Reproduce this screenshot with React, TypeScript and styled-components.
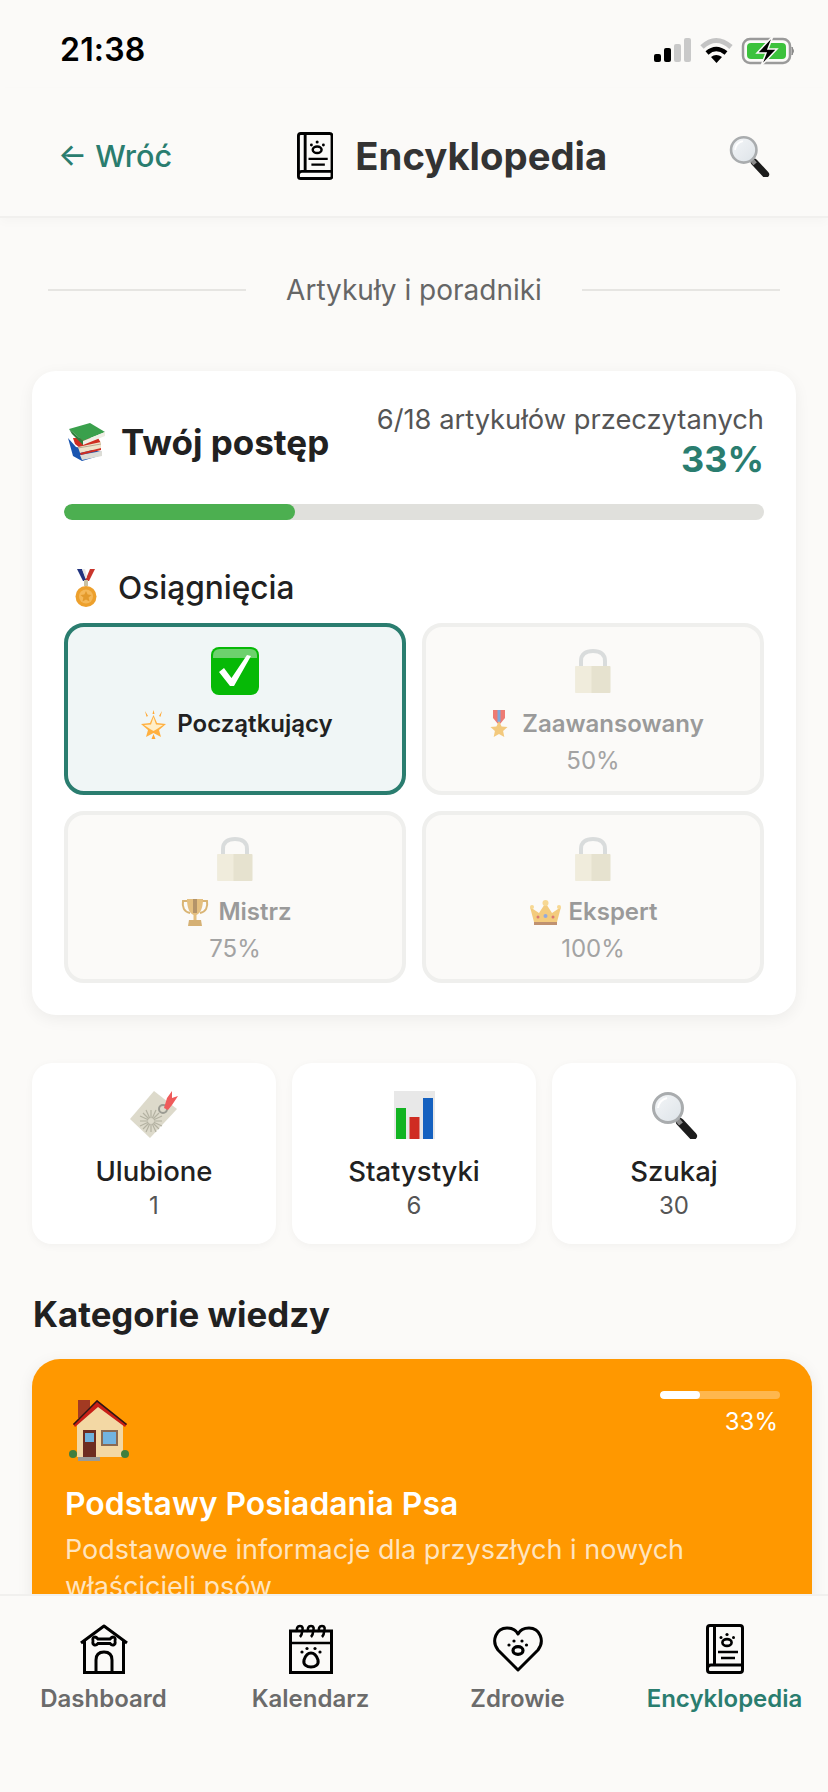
import React from "react";
import styled, { createGlobalStyle } from "styled-components";

const Global = createGlobalStyle`
  html, body { margin: 0; padding: 0; background: #fbfaf8; }
  * { box-sizing: border-box; }
`;
const FONT = `Inter, "Noto Sans", sans-serif`;

const Page = styled.div`
  width: 828px; height: 1792px; display: flex; flex-direction: column; overflow: hidden;
  background: #fbfaf8; font-family: ${FONT}; color: #212121;
`;
const StatusBar = styled.div`
  height: 88px; flex: none; display: flex; justify-content: space-between; align-items: flex-start;
  padding: 32px 33px 0 60px;
`;
const Time = styled.span`
  font-size: 32px; line-height: 36px; font-weight: 600; color: #000; letter-spacing: 0.2px;
`;
const StatusIcons = styled.svg`margin-top: 4px; display: block;`;
const Header = styled.header`
  height: 130px; flex: none; display: flex; justify-content: space-between; align-items: center;
  padding: 8px 58px 0; border-bottom: 2px solid #f1f0ee; box-shadow: 0 4px 10px rgba(0,0,0,.025);
`;
const Back = styled.span`
  font-size: 30.5px; font-weight: 500; color: #2a7d6f; line-height: 36px; white-space: nowrap;
`;
const TitleWrap = styled.div`display: flex; align-items: center; gap: 22px; margin-left: 4px;`;
const Title = styled.h1`
  margin: 0; font-size: 38.3px; line-height: 44px; font-weight: 700; color: #333;
`;
const Main = styled.main`
  flex: 1; min-height: 0; overflow: hidden; padding: 56px 16px 0 32px;
`;
const Divider = styled.div`
  display: flex; align-items: center; gap: 40px; margin: 0 32px 0 16px;
  &::before, &::after { content: ""; flex: 1; height: 2px; background: #e6e5e2; }
`;
const DividerText = styled.span`font-size: 28px; line-height: 32px; color: #666; font-weight: 400;`;
const ProgressCard = styled.section`
  width: 764px; height: 644px; margin-top: 65px; padding: 32px; background: #fff; border-radius: 24px;
  box-shadow: 0 4px 16px rgba(0,0,0,.06);
`;
const ProgressTop = styled.div`display: flex; justify-content: space-between; align-items: center;`;
const Heading = styled.div`display: flex; align-items: center; gap: 16px; margin-left: 4px;`;
const HeadingText = styled.h2`margin: 0; font-size: 35px; line-height: 44px; font-weight: 700; color: #212121;`;
const ProgressInfo = styled.div`text-align: right;`;
const Read = styled.div`font-size: 27.3px; line-height: 34px; color: #555;`;
const Percent = styled.div`font-size: 36px; line-height: 44px; font-weight: 700; color: #2a7d6f;`;
const Track = styled.div`height: 16px; margin-top: 23px; border-radius: 8px; background: #e0e0dc; overflow: hidden;`;
const Fill = styled.div`height: 100%; border-radius: 8px; background: #4caf50;`;
const AchHeading = styled.div`display: flex; align-items: center; gap: 21px; margin: 48px 0 15px 11px;`;
const AchText = styled.h3`margin: 0; font-size: 31.6px; line-height: 40px; font-weight: 500; color: #212121;`;
const AchGrid = styled.div`display: grid; grid-template-columns: 1fr 1fr; gap: 16px;`;
const Ach = styled.div<{ $on?: boolean }>`
  height: 172px; padding-top: 20px; border-radius: 20px; display: flex; flex-direction: column; align-items: center;
  border: 4px solid ${p => (p.$on ? "#2a7d6f" : "#efefed")};
  background: ${p => (p.$on ? "#f0f6f6" : "#fbfaf8")};
`;
const AchIcon = styled.div<{ $on?: boolean }>`height: 48px; opacity: ${p => (p.$on ? 1 : 0.55)};`;
const AchLabel = styled.div<{ $on?: boolean }>`
  display: flex; align-items: center; gap: 7px; margin-top: 12px; font-size: 24px; line-height: 34px; font-weight: 600;
  color: ${p => (p.$on ? "#212121" : "#9a9a9a")};
  svg { opacity: ${p => (p.$on ? 1 : 0.65)}; }
`;
const AchEmoji = styled.span`width: 33px; height: 30px; flex: none; display: flex; align-items: center; justify-content: center;`;
const AchPct = styled.div`margin-top: 5px; font-size: 24px; line-height: 30px; color: #a3a3a3;`;
const Stats = styled.div`display: grid; grid-template-columns: repeat(3, 1fr); gap: 16px; width: 764px; margin-top: 48px;`;
const Stat = styled.div`
  height: 181px; padding-top: 28px; background: #fff; border-radius: 20px; display: flex; flex-direction: column; align-items: center;
  box-shadow: 0 2px 8px rgba(0,0,0,.04);
`;
const StatIcon = styled.div`height: 48px;`;
const StatLabel = styled.div`margin-top: 14px; font-size: 27.5px; line-height: 36px; font-weight: 500; color: #212121;`;
const StatCount = styled.div`margin-top: 2px; font-size: 24px; line-height: 30px; color: #555;`;
const SectionTitle = styled.h2`margin: 50px 0 25px 1px; font-size: 34.8px; line-height: 40px; font-weight: 700; color: #212121;`;
const CategoryCard = styled.article`
  background: #ff9800; border-radius: 28px; padding: 32px 32px 32px; color: #fff; box-shadow: 0 4px 16px rgba(0,0,0,.08);
`;
const CategoryTop = styled.div`display: flex; justify-content: space-between; align-items: flex-start; height: 70px;`;
const HouseBox = styled.div`margin: 9px 0 0 5px;`;
const CatProgress = styled.div`width: 120px; display: flex; flex-direction: column; align-items: flex-end;`;
const CatTrack = styled.div`width: 100%; height: 8px; border-radius: 4px; background: rgba(255,255,255,.3); overflow: hidden;`;
const CatFill = styled.div`height: 100%; border-radius: 4px; background: #fff;`;
const CatPct = styled.div`margin-top: 8px; font-size: 24px; line-height: 30px; color: #fff; margin-right: 2px;`;
const CatTitle = styled.h3`margin: 23px 0 0 1px; font-size: 31.9px; line-height: 40px; font-weight: 600;`;
const CatDesc = styled.p`margin: 7px 0 0 1px; font-size: 27px; line-height: 37px; color: rgba(255,255,255,.75);`;
const Nav = styled.nav`
  height: 198px; flex: none; display: grid; grid-template-columns: repeat(4, 1fr); padding-top: 28px;
  background: #fbfaf8; border-top: 2px solid #f1f0ee;
`;
const Tab = styled.div`display: flex; flex-direction: column; align-items: center;`;
const TabIcon = styled.div`height: 50px; display: flex; align-items: center;`;
const TabLabel = styled.span<{ $on?: boolean }>`
  margin-top: 9px; font-size: 24px; line-height: 32px; font-weight: 600; color: ${p => (p.$on ? "#2a7d6f" : "#6b6b6b")};
`;

const StatusGlyphs = () => (
  <StatusIcons width="142" height="32" viewBox="0 0 142 32">
    <rect x="1" y="18" width="7" height="8" rx="2" fill="#000" />
    <rect x="11" y="12" width="7" height="14" rx="2" fill="#000" />
    <rect x="21" y="8" width="7" height="18" rx="2" fill="#c9c9c9" />
    <rect x="31" y="2" width="7" height="24" rx="2" fill="#c9c9c9" />
    <path d="M49 11 Q63 -2 78 11" fill="none" stroke="#c4c4c4" strokeWidth="5" />
    <path d="M54 17 Q63 9 73 17" fill="none" stroke="#000" strokeWidth="4.5" />
    <path d="M58 21 Q63 17 69 21 L63.5 27 Z" fill="#000" />
    <rect x="90" y="3" width="47" height="24" rx="7" fill="none" stroke="#9a9a9a" strokeWidth="2.5" />
    <rect x="94" y="7" width="39" height="16" rx="4" fill="#3cc23c" />
    <path d="M139 11 Q142 15 139 19 Z" fill="#8a8a8a" stroke="#8a8a8a" />
    <path d="M120 0 L104 17 H113 L108 30 L124 13 H115 Z" fill="#000" stroke="#fbfaf8" strokeWidth="1.5" />
  </StatusIcons>
);

const BookIcon = ({ h = 50 }: { h?: number }) => (
  <svg width={(h * 38) / 50} height={h} viewBox="0 0 38 50" fill="none" stroke="#000" strokeWidth="3">
    <rect x="1.5" y="1.5" width="35" height="47" rx="2.5" />
    <path d="M8.5 1.5V41M1.5 44Q2 41 5 41H36.5" />
    <ellipse cx="21" cy="18.5" rx="4.6" ry="3.4" strokeWidth="2.6" />
    <g fill="#000" stroke="none">
      <circle cx="21" cy="10.5" r="1.6" /><circle cx="15" cy="13.5" r="1.5" /><circle cx="27.5" cy="13.5" r="1.5" />
    </g>
    <path d="M12 28H32M15 34H29" strokeWidth="2.4" />
  </svg>
);
const PawDots = ({ pts }: { pts: number[][] }) => (
  <g fill="#000" stroke="none">{pts.map(([x, y]) => <circle key={x + "-" + y} cx={x} cy={y} r="1.6" />)}</g>
);
const DogHouseIcon = () => (
  <svg width="48" height="50" viewBox="0 0 48 50" fill="none" stroke="#000" strokeWidth="3">
    <path d="M1 19 L24 2 L47 19" strokeLinejoin="round" />
    <path d="M4.5 16V48.5H43.5V16" />
    <path d="M16 48.5V36Q16 28 24 28T32 36V48.5" />
    <path d="M18 15C15 11.5 12 13 13 17 12 21 15.5 22.5 18 19.5H30C32.5 22.5 36 21 35 17 36 13 33 11.5 30 15Z" strokeWidth="2.8" />
  </svg>
);
const CalendarIcon = () => (
  <svg width="44" height="50" viewBox="0 0 44 50" fill="none" stroke="#000" strokeWidth="3">
    <rect x="1.5" y="7" width="41" height="41.5" />
    <path d="M1.5 19H42.5" strokeWidth="2.4" />
    <path d="M8 8Q7 2 11 2T13 8Q13 11 11 13M19 8Q18 2 22 2T24 8Q24 11 22 13M30 8Q29 2 33 2T35 8Q35 11 33 13" strokeWidth="2.6" />
    <path d="M22 29C18 29 16 33 15 36 14 41 18 43 22 43S30 41 29 36C28 33 26 29 22 29Z" />
    <PawDots pts={[[13, 28], [18, 24.5], [26, 24.5], [31, 28]]} />
  </svg>
);
const HeartIcon = () => (
  <svg width="50" height="46" viewBox="0 0 50 46" fill="none" stroke="#000" strokeWidth="3">
    <path d="M25 44 L5 24 C-2 15 3 2 14 2 C19 2 23 4 25 8 C27 4 31 2 36 2 C47 2 52 15 45 24 Z" strokeLinejoin="round" />
    <ellipse cx="25" cy="24.5" rx="5" ry="3.8" strokeWidth="3.2" />
    <PawDots pts={[[16, 19], [21, 15], [29, 15], [33.5, 19]]} />
  </svg>
);
const Magnifier = ({ s = 48 }: { s?: number }) => (
  <svg width={s} height={s} viewBox="0 0 48 48">
    <defs>
      <linearGradient id="lens" x1="0" y1="0" x2="1" y2="1"><stop offset="0" stopColor="#f4f6f8" /><stop offset="1" stopColor="#dde3e8" /></linearGradient>
    </defs>
    <path d="M30 31 L43 45" stroke="#1c1c1c" strokeWidth="8" strokeLinecap="round" />
    <path d="M26 27 L31 33" stroke="#8c8c8c" strokeWidth="5" />
    <circle cx="18" cy="17" r="14.5" fill="url(#lens)" stroke="#a9acae" strokeWidth="3" />
    <path d="M8 17 Q9 9 17 7" fill="none" stroke="#fff" strokeWidth="2" />
  </svg>
);
const Books = () => (
  <svg width="37" height="38" viewBox="0 0 37 38">
    <path d="M0 15 L8 24 L34 29 V32 L14 38 L5 33Z" fill="#1a55b0" />
    <path d="M12 32 L34 28 V33 L14 37Z" fill="#dcdcd6" />
    <path d="M5 15 L30 15 L33 20 L12 25 L7 21Z" fill="#cf2e22" />
    <path d="M10 24 L33 19 V25 L12 30Z" fill="#f0e2ca" />
    <path d="M10 25 L33 21" stroke="#b8a88e" strokeWidth="1" />
    <path d="M12 30 L33 25 V27 L13 32Z" fill="#cf2e22" />
    <path d="M1 6 L22 0 L37 9 L15 18 Z" fill="#3aa04c" />
    <path d="M1 6 L15 18 V22 L4 11 Z" fill="#2c7f3c" />
    <path d="M15 18 L37 9 V13 L15 22 Z" fill="#efeee4" />
  </svg>
);
const Medal = () => (
  <svg width="22" height="39" viewBox="0 0 22 39">
    <path d="M2 0H7L12 12H8Z" fill="#22347f" /><path d="M20 0H15L10 12H14Z" fill="#c9352c" /><path d="M7 0H10L12 8 10.5 10Z" fill="#e6e6e6" />
    <rect x="9" y="11" width="4" height="6" fill="#c9c1a4" />
    <circle cx="11" cy="27.5" r="10.5" fill="#eda02c" />
    <circle cx="11" cy="27.5" r="7" fill="#f5b858" />
    <path d="M11 22l1.7 3.6 3.8.4-2.9 2.6.9 3.8-3.5-2-3.5 2 .9-3.8L5.5 26l3.8-.4Z" fill="#e39a2c" />
  </svg>
);
const Check = () => (
  <svg width="48" height="48" viewBox="0 0 48 48">
    <rect width="48" height="48" rx="8" fill="#06b906" />
    <path d="M2 9Q2 2 9 2H39Q46 2 46 9V11H2Z" fill="#6dd16d" />
    <path d="M8 25 L13 21 L20.5 31 L36 8 L40 9 L23 39 H19 Z" fill="#fff" />
  </svg>
);
const Lock = () => (
  <svg width="36" height="48" viewBox="0 0 36 48">
    <path d="M6 20V14C6 7 11 4 18 4S30 7 30 14V20" fill="none" stroke="#bfc4c6" strokeWidth="4" />
    <rect x="0.5" y="19" width="35" height="27" rx="1" fill="#d6cfae" />
    <rect x="0.5" y="19" width="16" height="27" fill="#e8e1c6" />
  </svg>
);
const Star = () => (
  <svg width="27" height="29" viewBox="0 0 27 29">
    <path d="M13.5 5 L17 13 L26 14 L19 20 L21 27 L13.5 23 L6 27 L8 20 L1 14 L10 13 Z" fill="#ffb040" />
    <path d="M13.5 7 L16 14.5 L23 15 L17 19 L13.5 21 L10 19 L4 15 L11 14.5 Z" fill="#ffeec8" />
    <path d="M13.5 0l1 4h-2zM5 1l3 5-1.5.8zM22 1l-3 5 1.5.8zM13.5 24l2 5h-4z" fill="#ffa733" />
  </svg>
);
const MilitaryMedal = () => (
  <svg width="18" height="29" viewBox="0 0 18 29">
    <path d="M3 0H15V8L10 14H8L3 8Z" fill="#e8382f" />
    <rect x="7.5" y="0" width="3" height="12" fill="#3a7fd0" />
    <path d="M9 11l2.6 5.4 5.9.7-4.4 4 1.2 5.9-5.3-3-5.3 3 1.2-5.9-4.4-4 5.9-.7Z" fill="#f0b03c" />
  </svg>
);
const Trophy = () => (
  <svg width="28" height="29" viewBox="0 0 28 29">
    <path d="M7 3H2C1 9 3 14 9 15M21 3H26C27 9 25 14 19 15" fill="none" stroke="#c8902e" strokeWidth="2" />
    <path d="M6 1H22C22 9 20 15 15.5 17V22H12.5V17C8 15 6 9 6 1Z" fill="#d9a040" />
    <path d="M12 1H16V15H12Z" fill="#8f5f1e" />
    <path d="M8 22H20L21 28H7Z" fill="#c28a2e" />
  </svg>
);
const Crown = () => (
  <svg width="31" height="29" viewBox="0 0 31 29">
    <path d="M4 24 L0 9 L9 15 L15.5 5 L22 15 L31 9 L27 24 Z" fill="#f0b23c" />
    <path d="M4 24H27V27H4Z" fill="#a05a28" />
    <circle cx="15.5" cy="5" r="3" fill="#f5c75e" /><circle cx="2" cy="9" r="2" fill="#f5c75e" /><circle cx="29" cy="9" r="2" fill="#f5c75e" />
    <circle cx="15.5" cy="18" r="2" fill="#5a7fd0" /><circle cx="8" cy="19" r="1.5" fill="#c9352c" /><circle cx="23" cy="19" r="1.5" fill="#c9352c" />
  </svg>
);
const BookmarkTag = () => (
  <svg width="49" height="48" viewBox="0 0 49 48">
    <path d="M24 0 L47 18 L20 47 L0 28 Z" fill="#dddacb" />
    <g stroke="#b4b2a2" strokeWidth="1.2">
      <path d="M10 30H32M21 19V41M13 22L29 38M29 22L13 38M16 19L26 41M26 19L16 41M10 25L32 35M32 25L10 35" />
    </g>
    <circle cx="21" cy="30" r="3" fill="#dddacb" />
    <circle cx="33" cy="18" r="4" fill="none" stroke="#9b9b92" strokeWidth="2" />
    <path d="M34 17 L37 7 L42 0 L42 7 L48 5 L42 14 L38 19 Z" fill="#ef5b5b" />
  </svg>
);
const BarChart = () => (
  <svg width="41" height="48" viewBox="0 0 41 48">
    <rect width="41" height="48" fill="#e8e8e8" />
    <rect x="2" y="17" width="10" height="31" fill="#12b422" />
    <rect x="15.5" y="26" width="10" height="22" fill="#cf2c22" />
    <rect x="29" y="7" width="10" height="41" fill="#1561c0" />
  </svg>
);
const House = () => (
  <svg width="60" height="62" viewBox="0 0 60 62">
    <rect x="9" y="0" width="12" height="18" fill="#a33a22" />
    <path d="M8 24 L29 3 L54 24 V57 H8 Z" fill="#f3d8a4" />
    <path d="M4 24 L28 0 L58 24 L56 27 L29 7 L6 27 Z" fill="#c81f16" />
    <path d="M28 0 L58 24 L57 25 L28 2 L5 25 L4 24 Z" fill="#2a1a14" />
    <rect x="14" y="30" width="13" height="27" fill="#6e2d20" />
    <rect x="16" y="33" width="9" height="9" fill="#6fb1dc" />
    <rect x="32" y="30" width="17" height="16" fill="#8a6a52" />
    <rect x="34" y="32" width="13" height="12" fill="#72b4e0" />
    <circle cx="4" cy="54" r="4" fill="#3f7f3f" />
    <circle cx="56" cy="54" r="4" fill="#3f7f3f" />
    <rect x="9" y="57" width="22" height="4" fill="#9a9a96" />
  </svg>
);

const achievements = [
  { on: true, icon: <Star />, label: "Początkujący" },
  { icon: <MilitaryMedal />, label: "Zaawansowany", pct: "50%" },
  { icon: <Trophy />, label: "Mistrz", pct: "75%" },
  { icon: <Crown />, label: "Ekspert", pct: "100%" },
];
const stats = [
  { icon: <BookmarkTag />, label: "Ulubione", count: "1" },
  { icon: <BarChart />, label: "Statystyki", count: "6" },
  { icon: <Magnifier />, label: "Szukaj", count: "30" },
];
const tabs = [
  { icon: <DogHouseIcon />, label: "Dashboard" },
  { icon: <CalendarIcon />, label: "Kalendarz" },
  { icon: <HeartIcon />, label: "Zdrowie" },
  { icon: <BookIcon />, label: "Encyklopedia", on: true },
];

export default function App() {
  return (
    <Page>
      <Global />
      <StatusBar>
        <Time>21:38</Time>
        <StatusGlyphs />
      </StatusBar>
      <Header>
        <Back>← Wróć</Back>
        <TitleWrap><BookIcon h={48} /><Title>Encyklopedia</Title></TitleWrap>
        <Magnifier s={42} />
      </Header>
      <Main>
        <Divider><DividerText>Artykuły i poradniki</DividerText></Divider>
        <ProgressCard>
          <ProgressTop>
            <Heading><Books /><HeadingText>Twój postęp</HeadingText></Heading>
            <ProgressInfo>
              <Read>6/18 artykułów przeczytanych</Read>
              <Percent>33%</Percent>
            </ProgressInfo>
          </ProgressTop>
          <Track><Fill style={{ width: "33%" }} /></Track>
          <AchHeading><Medal /><AchText>Osiągnięcia</AchText></AchHeading>
          <AchGrid>
            {achievements.map(a => (
              <Ach key={a.label} $on={a.on}>
                <AchIcon $on={a.on}>{a.on ? <Check /> : <Lock />}</AchIcon>
                <AchLabel $on={a.on}><AchEmoji>{a.icon}</AchEmoji>{a.label}</AchLabel>
                {a.pct && <AchPct>{a.pct}</AchPct>}
              </Ach>
            ))}
          </AchGrid>
        </ProgressCard>
        <Stats>
          {stats.map(s => (
            <Stat key={s.label}>
              <StatIcon>{s.icon}</StatIcon>
              <StatLabel>{s.label}</StatLabel>
              <StatCount>{s.count}</StatCount>
            </Stat>
          ))}
        </Stats>
        <SectionTitle>Kategorie wiedzy</SectionTitle>
        <CategoryCard>
          <CategoryTop>
            <HouseBox><House /></HouseBox>
            <CatProgress>
              <CatTrack><CatFill style={{ width: "33%" }} /></CatTrack>
              <CatPct>33%</CatPct>
            </CatProgress>
          </CategoryTop>
          <CatTitle>Podstawy Posiadania Psa</CatTitle>
          <CatDesc>Podstawowe informacje dla przyszłych i nowych właścicieli psów</CatDesc>
        </CategoryCard>
      </Main>
      <Nav>
        {tabs.map(t => (
          <Tab key={t.label}>
            <TabIcon>{t.icon}</TabIcon>
            <TabLabel $on={t.on}>{t.label}</TabLabel>
          </Tab>
        ))}
      </Nav>
    </Page>
  );
}
